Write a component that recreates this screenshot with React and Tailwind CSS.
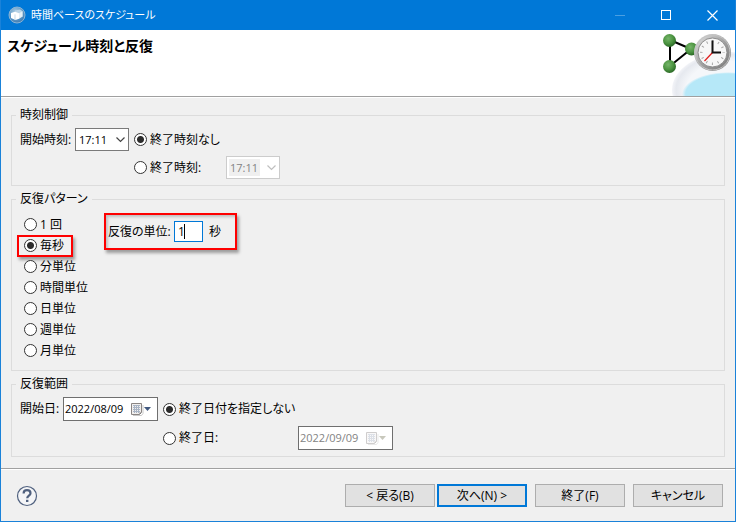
import { useState } from "react";

const TIMES = ["17:11", "17:30", "18:00"];

const PATTERNS = [
  { id: "once", label: "1 回" },
  { id: "second", label: "毎秒" },
  { id: "minute", label: "分単位" },
  { id: "hour", label: "時間単位" },
  { id: "day", label: "日単位" },
  { id: "week", label: "週単位" },
  { id: "month", label: "月単位" },
];

function AppIcon() {
  return (
    <svg width="18" height="18" viewBox="0 0 18 18" aria-hidden="true">
      <defs>
        <radialGradient id="globe" cx="0.4" cy="0.3" r="0.75">
          <stop offset="0" stopColor="#a9cbe2" />
          <stop offset="0.6" stopColor="#5c96c4" />
          <stop offset="1" stopColor="#3c78b0" />
        </radialGradient>
      </defs>
      <circle cx="9" cy="9" r="8" fill="url(#globe)" stroke="#8ab4d6" />
      <path d="M7 4.5l5-1 3 2v5l-4 2-4-2z" fill="#b9d3e6" />
      <path d="M3 7l4-1.2 4 1.4v5.6L7.5 14 3 12z" fill="#fff" />
      <path d="M7 8.4V14" stroke="#c5d9e8" />
      <path d="M11 7.2l3-1.7v5l-3 2.3z" fill="#e4eff7" />
    </svg>
  );
}

function HeaderArt() {
  return (
    <svg width="80" height="66" viewBox="0 0 80 66" aria-hidden="true">
      <defs>
        <radialGradient id="node" cx="0.4" cy="0.35" r="0.65">
          <stop offset="0" stopColor="#76b56a" />
          <stop offset="0.6" stopColor="#4c9441" />
          <stop offset="1" stopColor="#2c6a27" />
        </radialGradient>
        <linearGradient id="rim" x1="0" y1="0" x2="1" y2="1">
          <stop offset="0" stopColor="#e6e6e6" />
          <stop offset="0.5" stopColor="#a2a2a2" />
          <stop offset="1" stopColor="#747474" />
        </linearGradient>
        <radialGradient id="plate">
          <stop offset="0.75" stopColor="#f5f7fa" />
          <stop offset="0.93" stopColor="#e6e9ef" />
          <stop offset="1" stopColor="#f3f4f8" />
        </radialGradient>
        <radialGradient id="pool">
          <stop offset="0.92" stopColor="#b6e8f8" />
          <stop offset="1" stopColor="#b6e8f8" stopOpacity="0" />
        </radialGradient>
      </defs>
      <ellipse cx="75" cy="60" rx="58" ry="38" fill="url(#plate)" />
      <ellipse cx="73" cy="64" rx="46" ry="22" fill="url(#pool)" />
      <path d="M15 10v26M15 10l21 9M15 36l21-17" stroke="#000" strokeWidth="2" />
      <circle cx="14.5" cy="10.5" r="6.5" fill="url(#node)" />
      <circle cx="14.5" cy="36.5" r="6.5" fill="url(#node)" />
      <circle cx="36.5" cy="19" r="6.5" fill="url(#node)" />
      <circle cx="57.5" cy="22.5" r="18.5" fill="url(#rim)" />
      <circle cx="57.5" cy="22.5" r="17.5" fill="none" stroke="#c4c4c4" />
      <circle cx="57.5" cy="22.5" r="14.5" fill="#f7f7f7" stroke="#8b8b8b" />
      <circle
        cx="57.5"
        cy="22.5"
        r="11.2"
        fill="none"
        stroke="#a5a5a5"
        strokeWidth="2.5"
        strokeDasharray="1 4.864"
        strokeDashoffset="0.5"
      />
      <path d="M57.5 22.5L49.5 31" stroke="#e01b1b" strokeWidth="1.2" />
      <path d="M57.5 10.5v12H66" fill="none" stroke="#111" strokeWidth="2" />
    </svg>
  );
}

function Radio({ id, name, checked, onChange, children }) {
  return (
    <label htmlFor={id} className="flex items-center gap-[3px] whitespace-nowrap">
      <input
        type="radio"
        id={id}
        name={name}
        checked={checked}
        onChange={onChange}
        className="size-[13px] shrink-0 appearance-none rounded-full border border-[#333] bg-white checked:bg-[radial-gradient(circle,#2b2b2b_3px,white_4px)]"
      />
      {children}
    </label>
  );
}

function TimeSelect({ label, disabled }) {
  return (
    <span className="relative flex h-[23px] w-[54px]">
      <select
        aria-label={label}
        disabled={disabled}
        className="w-full appearance-none border border-[#7a7a7a] bg-white pl-[3px] text-[11px] leading-4 text-black disabled:border-[#ccc] disabled:bg-[linear-gradient(#efefef,#efefef)] disabled:bg-[length:31px_17px] disabled:bg-[position:2px_2px] disabled:bg-no-repeat disabled:text-[#838383] disabled:opacity-100"
      >
        {TIMES.map((time) => (
          <option key={time}>{time}</option>
        ))}
      </select>
      <svg
        className={`pointer-events-none absolute top-2 right-1 ${
          disabled ? "text-[#bfbfbf]" : "text-[#444]"
        }`}
        width="9"
        height="7"
        viewBox="0 0 9 7"
        fill="none"
        stroke="currentColor"
        strokeWidth="1.2"
      >
        <path d="M0.5 1.5l4 4 4-4" />
      </svg>
    </span>
  );
}

function DateField({ label, id, value, disabled }) {
  return (
    <span
      className={`flex h-6 w-[95px] items-center border border-[#6f6f6f] bg-white ${
        disabled ? "text-[#838383]" : "text-black"
      }`}
    >
      <input
        id={id}
        type="text"
        aria-label={label}
        defaultValue={value}
        disabled={disabled}
        className="w-[67px] pl-px text-[11px] leading-4 outline-none"
      />
      <button
        type="button"
        aria-label="カレンダー"
        disabled={disabled}
        className="disabled:opacity-40"
      >
        <svg width="21" height="14" viewBox="0 0 21 14">
          <path d="M2 13.5h8.5l1.5-2V3" fill="none" stroke="#c9c9c9" />
          <path d="M0.5 1.5h10v9l-2 2h-8z" fill="#f1efee" stroke="#8a8583" />
          <path
            d="M2 3.5h7M2 5.5h7M2 7.5h7M2 9.5h7M3.5 3v8M5.5 3v8M7.5 3v8"
            stroke="#a9b4c4"
          />
          <path d="M8.5 12.5v-2h2z" fill="#6d6a68" />
          <path d="M13 5h7l-3.5 4z" fill={disabled ? "#77775a" : "#41587f"} />
        </svg>
      </button>
    </span>
  );
}

function Group({ title, className, children }) {
  return (
    <fieldset className="min-w-0 border border-[#dcdcdc] px-2">
      <legend className="-ml-1 px-1 leading-4">{title}</legend>
      <div className={className}>{children}</div>
    </fieldset>
  );
}

function DialogButton({ primary, children }) {
  return (
    <button
      type="button"
      className={`h-[23px] w-[90px] bg-[#e1e1e1] leading-4 ${
        primary ? "border-2 border-[#0078d7]" : "border border-[#adadad]"
      }`}
    >
      {children}
    </button>
  );
}

function App() {
  const [endTime, setEndTime] = useState("none");
  const [pattern, setPattern] = useState("second");
  const [endDate, setEndDate] = useState("none");

  return (
    <div className="mr-px border-x border-b border-[#1a82d9] bg-[#f0f0f0] font-['Open_Sans','Noto_Sans_CJK_JP',sans-serif] text-xs leading-4 text-black [font-feature-settings:'palt']">
      {/* Title bar */}
      <header className="flex h-[30px] items-center bg-[#0078d7] pl-[7px] text-white">
        <AppIcon />
        <span className="ml-[5px] flex-1 text-[11px]">時間ベースのスケジュール</span>
        <button type="button" aria-label="最小化" className="flex h-full w-[46px] items-center justify-center">
          <span className="h-px w-[10px] bg-[#4a9fe2]" />
        </button>
        <button type="button" aria-label="最大化" className="flex h-full w-[46px] items-center justify-center">
          <span className="size-[10px] border border-white" />
        </button>
        <button type="button" aria-label="閉じる" className="flex h-full w-[46px] items-center justify-center">
          <svg width="11" height="11" viewBox="0 0 11 11" stroke="#fff" strokeWidth="1.2">
            <path d="M0.5 0.5l10 10M10.5 0.5l-10 10" />
          </svg>
        </button>
      </header>

      <div className="flex h-[67px] justify-between border-b border-[#a0a0a0] bg-white">
        <h1 className="pt-[6px] pl-[6px] text-sm leading-5 font-bold">スケジュール時刻と反復</h1>
        <HeaderArt />
      </div>

      <main className="flex flex-col gap-[5px] border-t border-white px-[10px] pt-[9px] pb-[11px]">
        <Group title="時刻制御" className="flex items-start gap-[5px] pt-[5px] pb-[6px]">
          <div className="flex items-center gap-[6px] whitespace-nowrap">
            <span className="w-[49px]">開始時刻:</span>
            <TimeSelect label="開始時刻" />
          </div>
          <div className="flex flex-col gap-[5px]">
            <div className="flex h-[23px] items-center">
              <Radio
                id="no-end-time"
                name="end-time"
                checked={endTime === "none"}
                onChange={() => setEndTime("none")}
              >
                終了時刻なし
              </Radio>
            </div>
            <div className="flex items-center">
              <div className="w-[92px]">
                <Radio
                  id="has-end-time"
                  name="end-time"
                  checked={endTime === "time"}
                  onChange={() => setEndTime("time")}
                >
                  終了時刻:
                </Radio>
              </div>
              <TimeSelect label="終了時刻" disabled={endTime === "none"} />
            </div>
          </div>
        </Group>

        <Group title="反復パターン" className="flex items-start pt-[6px] pb-[9px]">
          <div className="w-[84px] pt-px pl-1">
            {PATTERNS.map((item) => (
              <div key={item.id} className="relative flex h-[21px] items-center">
                <Radio
                  id={`pattern-${item.id}`}
                  name="pattern"
                  checked={pattern === item.id}
                  onChange={() => setPattern(item.id)}
                >
                  {item.label}
                </Radio>
                {pattern === item.id && (
                  <span className="pointer-events-none absolute top-0 -left-[7px] h-[22px] w-14 border-2 border-[#fe0000] shadow-[2px_3px_3px_rgba(0,0,0,0.35)]" />
                )}
              </div>
            ))}
          </div>
          <div className="flex h-[37px] w-[133px] items-center border-2 border-[#fe0000] pl-[2px] whitespace-nowrap shadow-[2px_3px_3px_rgba(0,0,0,0.35),inset_2px_2px_3px_rgba(0,0,0,0.2)]">
            <label htmlFor="interval" className="w-[66px]">
              反復の単位:
            </label>
            <span className="relative flex h-[21px] w-[29px]">
              <input
                id="interval"
                type="text"
                defaultValue="1"
                className="w-full border border-[#0078d7] bg-white pl-[3px] leading-4 outline-none"
              />
              {/* text cursor */}
              <span className="absolute top-[3px] left-[10px] h-[15px] w-px bg-black" />
            </span>
            <span className="ml-[6px]">秒</span>
          </div>
        </Group>

        <Group title="反復範囲" className="flex items-start gap-[5px] pt-[5px] pb-[6px]">
          <div className="flex items-center gap-[6px] whitespace-nowrap">
            <label htmlFor="start-date" className="w-[37px]">
              開始日:
            </label>
            <DateField id="start-date" label="開始日" value="2022/08/09" />
          </div>
          <div className="flex flex-col gap-[5px]">
            <div className="flex h-6 items-center">
              <Radio
                id="no-end-date"
                name="end-date"
                checked={endDate === "none"}
                onChange={() => setEndDate("none")}
              >
                終了日付を指定しない
              </Radio>
            </div>
            <div className="flex items-center">
              <div className="w-[135px]">
                <Radio
                  id="has-end-date"
                  name="end-date"
                  checked={endDate === "date"}
                  onChange={() => setEndDate("date")}
                >
                  終了日:
                </Radio>
              </div>
              <DateField
                id="finish-date"
                label="終了日"
                value="2022/09/09"
                disabled={endDate === "none"}
              />
            </div>
          </div>
        </Group>
      </main>

      <footer className="border-t border-[#a0a0a0]">
        <div className="flex items-center justify-between border-t border-white py-[14px] pr-3 pl-[15px]">
          <button type="button" aria-label="ヘルプ">
            <svg width="22" height="22" viewBox="0 0 22 22" fill="none" stroke="#50617f">
              <circle cx="11" cy="11" r="9.5" fill="#f4f5f7" strokeWidth="1.2" />
              <path
                d="M7.6 8.4C7.6 6.2 9 5.2 11 5.2s3.5 1.1 3.5 3c0 2.4-3.3 2.5-3.3 5"
                strokeWidth="2.2"
              />
              <path d="M11.2 14.8v2.2" strokeWidth="2.4" />
            </svg>
          </button>
          <div className="flex gap-2">
            <div className="flex gap-[2px]">
              <DialogButton>&lt; 戻る(B)</DialogButton>
              <DialogButton primary>次へ(N) &gt;</DialogButton>
            </div>
            <DialogButton>終了(F)</DialogButton>
            <DialogButton>キャンセル</DialogButton>
          </div>
        </div>
      </footer>
    </div>
  );
}

export default App;
